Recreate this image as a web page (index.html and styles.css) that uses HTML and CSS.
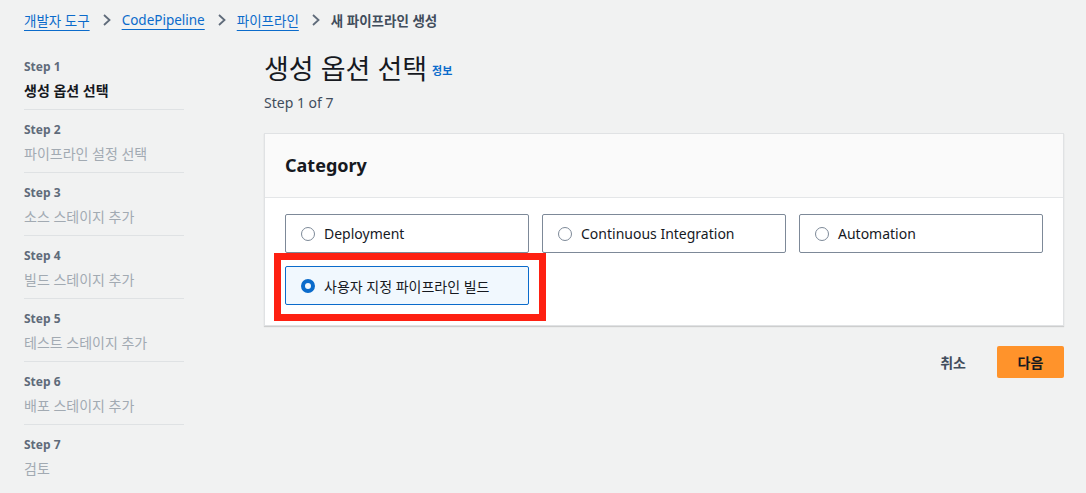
FILE: index.html
```html
<!DOCTYPE html>
<html>
	<head>
		<link rel="stylesheet" href="styles.css">
	</head>
	<body>
	<div class="crumbs">
		<a href="#">개발자 도구</a>
		<span class="chev"><svg width="10" height="12" viewBox="0 0 10 12"><path d="M2 1 L7.5 6 L2 11" fill="none" stroke="#5f6b7a" stroke-width="1.8"/></svg></span>
		<a href="#">CodePipeline</a>
		<span class="chev"><svg width="10" height="12" viewBox="0 0 10 12"><path d="M2 1 L7.5 6 L2 11" fill="none" stroke="#5f6b7a" stroke-width="1.8"/></svg></span>
		<a href="#">파이프라인</a>
		<span class="chev"><svg width="10" height="12" viewBox="0 0 10 12"><path d="M2 1 L7.5 6 L2 11" fill="none" stroke="#5f6b7a" stroke-width="1.8"/></svg></span>
		<span class="here">새 파이프라인 생성</span>
	</div>

	<div class="layout">
		<div class="steps">
			<div class="step active"><div class="num">Step 1</div><div class="name">생성 옵션 선택</div></div>
			<div class="step"><div class="num">Step 2</div><div class="name">파이프라인 설정 선택</div></div>
			<div class="step"><div class="num">Step 3</div><div class="name">소스 스테이지 추가</div></div>
			<div class="step"><div class="num">Step 4</div><div class="name">빌드 스테이지 추가</div></div>
			<div class="step"><div class="num">Step 5</div><div class="name">테스트 스테이지 추가</div></div>
			<div class="step"><div class="num">Step 6</div><div class="name">배포 스테이지 추가</div></div>
			<div class="step last"><div class="num">Step 7</div><div class="name">검토</div></div>
		</div>

		<div class="main">
			<h1 class="title">생성 옵션 선택 <a href="#" class="info">정보</a></h1>
			<p class="sub">Step 1 of 7</p>

			<div class="card">
				<div class="card-head">Category</div>
				<div class="tiles">
					<div class="tile"><span class="radio"></span>Deployment</div>
					<div class="tile"><span class="radio"></span>Continuous Integration</div>
					<div class="tile"><span class="radio"></span>Automation</div>
					<div class="tile checked"><span class="radio on"></span>사용자 지정 파이프라인 빌드<span class="mark"></span></div>
				</div>
			</div>

			<div class="actions">
				<a href="#" class="cancel">취소</a>
				<button class="next">다음</button>
			</div>
		</div>
	</div>
	</body>
</html>
```

FILE: styles.css
```css
body{
	margin: 0;
	background-color: #f1f2f2;
	font-family: "Noto Sans", "Noto Sans CJK KR", sans-serif;
	color: #16191f;
}
a{
	color: #0b6bcb;
}
.crumbs{
	display: flex;
	align-items: center;
	height: 40px;
	padding-left: 24px;
	font-size: 13.5px;
}
.crumbs a{
	text-decoration: underline;
	text-underline-offset: 4px;
}
.chev{
	display: flex;
	margin: 0 10px 0 12px;
}
.here{
	color: #414d5c;
	font-weight: bold;
}
.layout{
	display: flex;
	padding-left: 24px;
	gap: 80px;
}
.steps{
	width: 160px;
	flex: none;
	padding-top: 18px;
}
.step{
	border-bottom: 1px solid #dfe2e4;
	height: 51px;
	margin-bottom: 11px;
}
.step.last{
	border-bottom: none;
}
.num{
	font-size: 12px;
	color: #5f6b7a;
	font-weight: bold;
	line-height: 18px;
}
.name{
	font-size: 14px;
	color: #a2aab2;
	line-height: 20px;
	margin-top: 5px;
}
.step.active .name{
	color: #16191f;
	font-weight: bold;
}
.main{
	width: 800px;
}
.title{
	font-size: 27px;
	font-weight: normal;
	margin: 11px 0 0 0;
	line-height: 36px;
}
.info{
	font-size: 11px;
	font-weight: bold;
	text-decoration: none;
	vertical-align: 4px;
	margin-left: -2px;
}
.sub{
	margin: 4px 0 0 0;
	font-size: 14px;
	color: #414d5c;
	line-height: 20px;
}
.card{
	margin-top: 20px;
	background-color: white;
	border: 1px solid #e0e2e4;
	box-shadow: 0 1px 1px rgba(0,0,0,0.15);
}
.card-head{
	background-color: #fafafa;
	border-bottom: 1px solid #e4e6e8;
	height: 63px;
	line-height: 62px;
	padding-left: 20px;
	font-size: 18px;
	font-weight: bold;
}
.tiles{
	display: grid;
	grid-template-columns: 1fr 1fr 1fr;
	gap: 13px;
	padding: 16px 20px 20px 20px;
}
.tile{
	position: relative;
	height: 37px;
	border: 1px solid #7d8998;
	border-radius: 2px;
	display: flex;
	align-items: center;
	padding-left: 15px;
	font-size: 14px;
}
.tile.checked{
	background-color: #f1f8fe;
	border-color: #0b6bcb;
}
.radio{
	width: 12px;
	height: 12px;
	border: 1.5px solid #7d8998;
	border-radius: 50%;
	margin-right: 9px;
	flex: none;
}
.radio.on{
	border: 4px solid #0b6bcb;
	width: 6px;
	height: 6px;
}
.mark{
	position: absolute;
	left: -12px;
	top: -14px;
	width: 258px;
	height: 54px;
	border: 7px solid #fe2011;
}
.actions{
	display: flex;
	justify-content: flex-end;
	align-items: center;
	margin-top: 20px;
	gap: 31px;
}
.cancel{
	color: #414d5c;
	font-weight: bold;
	font-size: 14px;
	text-decoration: none;
}
.next{
	background-color: #ff932b;
	border: none;
	border-radius: 2px;
	width: 67px;
	height: 32px;
	font-family: "Noto Sans", "Noto Sans CJK KR", sans-serif;
	font-weight: bold;
	font-size: 14px;
	color: #16191f;
}
```
